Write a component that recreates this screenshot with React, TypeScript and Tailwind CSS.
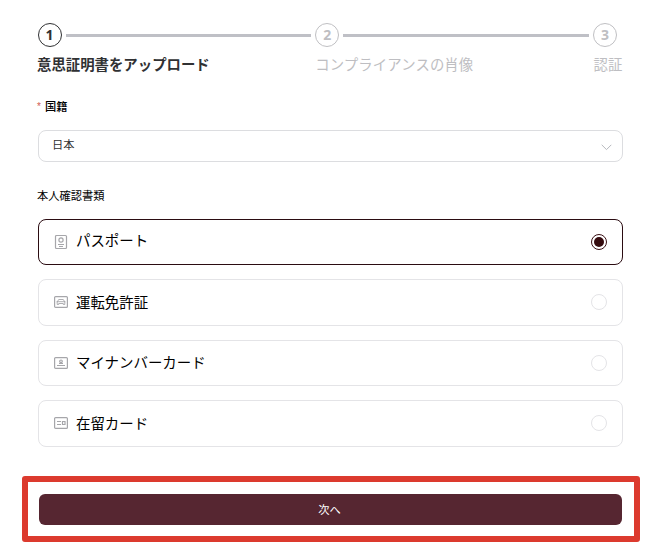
import { Fragment, useState } from "react";

const STEPS = [
  { label: "意思証明書をアップロード", labelClass: "left-[-1.5px]" },
  { label: "コンプライアンスの肖像", labelClass: "left-[-1px] tracking-[0.1px]" },
  { label: "認証", labelClass: "left-[-0.5px]" },
];

const DOCUMENTS = [
  { id: "passport", label: "パスポート", icon: PassportIcon, boxClass: "h-[46px]", labelClass: "-mt-1" },
  { id: "license", label: "運転免許証", icon: LicenseIcon, boxClass: "h-[47px] pb-px", labelClass: "-mt-px" },
  { id: "mynumber", label: "マイナンバーカード", icon: MyNumberIcon, boxClass: "h-[46px]", labelClass: "-mt-[3px]" },
  { id: "residence", label: "在留カード", icon: ResidenceIcon, boxClass: "h-[47px] pb-px", labelClass: "-mt-px" },
];

function PassportIcon() {
  return (
    <svg width="14" height="16" viewBox="0 0 14 16" fill="none" stroke="#a6a6aa" strokeWidth="1.2">
      <rect x="1.5" y="1.5" width="11" height="13" rx="1" />
      <circle cx="7" cy="6" r="2.1" />
      <path d="M4 10.5h6M5 12.5h4" />
    </svg>
  );
}

function LicenseIcon() {
  return (
    <svg width="14" height="12" viewBox="0 0 14 12" fill="none" stroke="#a6a6aa" strokeWidth="1.2">
      <rect x=".6" y=".6" width="12.8" height="10.8" rx="1" />
      <path d="M3.2 8.5V6L4.700 3.500h4.600L10.800 6v2.500H9.300M3.200 8.500h1.500v-1h4.600v1M2.500 5.700h9" strokeWidth=".9" />
    </svg>
  );
}

function MyNumberIcon() {
  return (
    <svg width="14" height="12" viewBox="0 0 14 12" fill="none" stroke="#a6a6aa" strokeWidth="1.2">
      <rect x=".6" y=".6" width="12.8" height="10.8" rx="1" />
      <circle cx="7" cy="4.3" r="1.3" />
      <path d="M5 6.5h4M3 8.5h8" />
    </svg>
  );
}

function ResidenceIcon() {
  return (
    <svg width="14" height="12" viewBox="0 0 14 12" fill="none" stroke="#a6a6aa" strokeWidth="1.2">
      <rect x=".6" y=".6" width="12.8" height="10.8" rx="1" />
      <path d="M3 4.500h4M3 7.500h4M8.500 4.500H11v3H8.500z" />
    </svg>
  );
}

export default function App() {
  const [selected, setSelected] = useState("passport");

  return (
    <main className="h-[553px] w-[661px] overflow-hidden bg-white pt-[23px] font-['Noto_Sans_CJK_JP',sans-serif] text-black">
      <div className="ml-[37.5px] flex w-[579.5px] items-center">
        {STEPS.map((step, i) => (
          <Fragment key={step.label}>
            {i > 0 && <div className="mx-1 h-[3px] flex-1 bg-[#bfc0c6]" />}
            <div
              className={`relative flex size-6 shrink-0 items-center justify-center rounded-full border pb-0.5 font-['Open_Sans','Noto_Sans',sans-serif] text-[14px] font-bold ${
                i === 0 ? "border-[#303133] text-[#303133]" : "border-[#c0c0c3] text-[#bebec2]"
              }`}
            >
              {i + 1}
              <span
                className={`absolute top-[30px] font-['Noto_Sans_CJK_JP',sans-serif] text-[14.4px] leading-5 whitespace-nowrap ${step.labelClass} ${
                  i === 0 ? "font-bold" : "font-normal"
                }`}
              >
                {step.label}
              </span>
            </div>
          </Fragment>
        ))}
      </div>

      <div className="mt-[50px] ml-[37px] flex h-[18px] items-center gap-1 text-[11.25px] font-medium">
        <span className="w-1 font-['Liberation_Sans',sans-serif] text-[10px] font-normal text-[#d05a50]">*</span>
        国籍
      </div>
      <button className="mt-[15px] ml-[38px] flex h-8 w-[585px] items-center justify-between rounded-lg border border-[#dcdde0] pr-[10px] pl-[13px] text-[11.25px] text-[#303133]">
        <span className="-mt-1">日本</span>
        <svg className="mt-0.5" width="11" height="7" viewBox="0 0 11 7" fill="none" stroke="#b6b8bd">
          <path d="M.7.8 5.500 5.600 10.300.8" />
        </svg>
      </button>

      <div className="mt-6 ml-[37px] flex h-[18px] items-center text-[11.25px]">本人確認書類</div>
      <div className="mt-[15px] ml-[38px] flex w-[585px] flex-col gap-[14px]">
        {DOCUMENTS.map((doc) => {
          const active = doc.id === selected;
          return (
            <button
              key={doc.id}
              onClick={() => setSelected(doc.id)}
              className={`flex items-center rounded-lg border pr-[15px] pl-[15px] text-[14.45px] ${doc.boxClass} ${
                active ? "border-[#2b0c12]" : "border-[#e4e4e7]"
              }`}
            >
              <doc.icon />
              <span className={`ml-2 ${doc.labelClass}`}>{doc.label}</span>
              <span
                className={`ml-auto flex size-4 items-center justify-center rounded-full border ${
                  active ? "border-[#3a1015]" : "border-[#e4e4e7]"
                }`}
              >
                {active && <span className="size-[10px] rounded-full bg-[#350b0e]" />}
              </span>
            </button>
          );
        })}
      </div>

      <div className="mt-[29px] ml-[22px] h-[66px] w-[618px] rounded-[3px] border-[6px] border-[#dc3a2e] px-[11px] pt-3">
        <button className="flex h-[31px] w-[583px] items-center justify-center rounded-md bg-[#562631] pr-0.5 text-[11.25px] text-white">
          次へ
        </button>
      </div>
    </main>
  );
}
